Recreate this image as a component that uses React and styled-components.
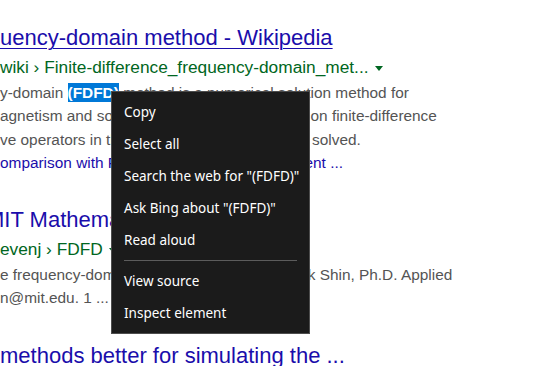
import styled, { createGlobalStyle } from "styled-components";

const Global = createGlobalStyle`
    html, body {
        margin: 0;
        padding: 0;
        background: #fff;
        overflow: hidden;
    }
    #root {
        width: 533px;
        height: 366px;
        position: relative;
        overflow: hidden;
    }
`

const Results = styled.div`
    display: flex;
    flex-direction: column;
    gap: 31px;
    padding-top: 23px;
    font-family: "Liberation Sans", Arial, sans-serif;
    white-space: nowrap;
`
const Result = styled.div`
    display: flex;
    flex-direction: column;
`
const Title = styled.a`
    display: block;
    font-size: 22px;
    line-height: 30px;
    color: #1a0dab;
    text-decoration: ${p => p.plain ? "none" : "underline"};
    text-decoration-thickness: 1px;
    text-underline-offset: 3px;
    text-indent: ${p => p.shift || 0}px;
`
const Cite = styled.div`
    display: flex;
    align-items: center;
    font-size: 17.3px;
    line-height: 28px;
    color: #006621;
`
const Caret = styled.span`
    display: inline-block;
    margin-left: 6px;
    margin-top: 2px;
    border-left: 4px solid transparent;
    border-right: 4px solid transparent;
    border-top: 5px solid #006621;
`
const Snippet = styled.div`
    font-size: 15.4px;
    line-height: 23.3px;
    color: #545454;
`
const Hl = styled.span`
    background: #0078d7;
    color: #fff;
    font-weight: bold;
    padding: 1px 0;
`
const SnipLink = styled.span`
    color: #1a0dab;
`

const Menu = styled.div`
    position: absolute;
    left: 111px;
    top: 91px;
    width: 197px;
    padding: 4px 0;
    background: #1b1b1b;
    border: 1px solid #4d4d4d;
    font-family: "Noto Sans", "Open Sans", sans-serif;
    font-size: 13.5px;
    color: #fff;
`
const Item = styled.div`
    height: 32px;
    line-height: 32px;
    padding-left: 12px;
    white-space: nowrap;
`
const Separator = styled.div`
    height: 1px;
    margin: 4px 12px;
    background: #5c5c5c;
`

export default function App(){
    return(
    <>
        <Global />
        <Results>
            <Result>
                <Title>uency-domain method - Wikipedia</Title>
                <Cite>wiki › Finite-difference_frequency-domain_met...<Caret /></Cite>
                <Snippet>y-domain <Hl>(FDFD)</Hl> method is a numerical solution method for</Snippet>
                <Snippet>agnetism and sometimes in acoustics, based on finite-difference</Snippet>
                <Snippet>ve operators in the differential equation being solved.</Snippet>
                <Snippet><SnipLink>omparison with FDTD and FEM · Finite element ...</SnipLink></Snippet>
            </Result>
            <Result>
                <Title plain shift={-14}>MIT Mathematics</Title>
                <Cite>evenj › FDFD<Caret /></Cite>
                <Snippet>e frequency-domain solver codes by Wonseok Shin, Ph.D. Applied</Snippet>
                <Snippet>n@mit.edu. 1 ...</Snippet>
            </Result>
            <Result>
                <Title plain>methods better for simulating the ...</Title>
            </Result>
        </Results>
        <Menu>
            <Item>Copy</Item>
            <Item>Select all</Item>
            <Item>Search the web for "(FDFD)"</Item>
            <Item>Ask Bing about "(FDFD)"</Item>
            <Item>Read aloud</Item>
            <Separator />
            <Item>View source</Item>
            <Item>Inspect element</Item>
        </Menu>
    </>
    )
}
